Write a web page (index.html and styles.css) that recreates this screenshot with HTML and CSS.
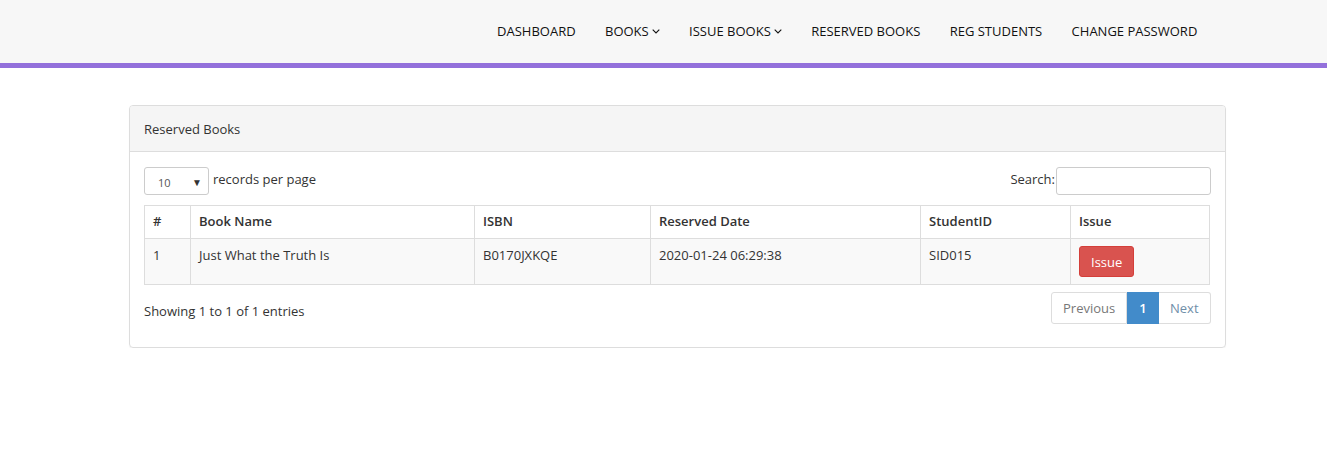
FILE: index.html
```html
<!DOCTYPE html>
<html>
<head>
<meta charset="utf-8">
<title>Reserved Books</title>
<link rel="stylesheet" href="styles.css">
</head>
<body>
<header class="navbar">
  <nav class="menu">
    <a class="item">DASHBOARD</a>
    <a class="item">BOOKS <svg class="caret" viewBox="0 0 8 5" width="8" height="5"><polyline points="0.7,0.7 4,4 7.3,0.7" fill="none" stroke="currentColor" stroke-width="1.1"/></svg></a>
    <a class="item">ISSUE BOOKS <svg class="caret" viewBox="0 0 8 5" width="8" height="5"><polyline points="0.7,0.7 4,4 7.3,0.7" fill="none" stroke="currentColor" stroke-width="1.1"/></svg></a>
    <a class="item">RESERVED BOOKS</a>
    <a class="item">REG STUDENTS</a>
    <a class="item">CHANGE PASSWORD</a>
  </nav>
</header>
<main class="content">
  <section class="panel">
    <div class="panel-heading">Reserved Books</div>
    <div class="panel-body">
      <div class="toolbar">
        <label class="length">
          <span class="select">10 <span class="arrow">&#9660;</span></span>
          <span class="lbl">records per page</span>
        </label>
        <label class="search"><span class="lbl">Search:</span><span class="input"></span></label>
      </div>
      <table class="grid">
        <thead>
          <tr>
            <th class="c1">#</th>
            <th class="c2">Book Name</th>
            <th class="c3">ISBN</th>
            <th class="c4">Reserved Date</th>
            <th class="c5">StudentID</th>
            <th class="c6">Issue</th>
          </tr>
        </thead>
        <tbody>
          <tr>
            <td>1</td>
            <td>Just What the Truth Is</td>
            <td>B0170JXKQE</td>
            <td>2020-01-24 06:29:38</td>
            <td>SID015</td>
            <td><button class="btn-issue">Issue</button></td>
          </tr>
        </tbody>
      </table>
      <div class="footer">
        <div class="info">Showing 1 to 1 of 1 entries</div>
        <ul class="pager">
          <li class="pg prev">Previous</li>
          <li class="pg active">1</li>
          <li class="pg next">Next</li>
        </ul>
      </div>
    </div>
  </section>
</main>
</body>
</html>
```

FILE: styles.css
```css
* { box-sizing: border-box; }
html, body { margin: 0; padding: 0; background: #fff; }
body {
  font-family: "Open Sans", "Liberation Sans", sans-serif;
  font-size: 13px;
  color: #333;
}
.navbar {
  height: 68px;
  background: #f7f7f7;
  border-bottom: 5px solid #9370db;
}
.menu {
  display: flex;
  justify-content: flex-end;
  height: 61px;
  align-items: center;
  padding-right: 115px;
}
.item {
  color: #111;
  font-size: 13px;
  padding: 0 14.7px;
  display: flex;
  align-items: center;
  gap: 3px;
  line-height: 18px;
}
.caret { margin-top: 1px; }
.content {
  padding-top: 37px;
  padding-left: 129px;
}
.panel {
  width: 1097px;
  border: 1px solid #ddd;
  border-radius: 4px;
  box-shadow: 0 1px 1px rgba(0,0,0,0.05);
}
.panel-heading {
  background: #f5f5f5;
  border-bottom: 1px solid #ddd;
  height: 46px;
  padding: 0 14px;
  display: flex;
  align-items: center;
  font-size: 13px;
  color: #333;
  border-radius: 3px 3px 0 0;
}
.panel-body {
  padding: 15px 14px 23px 14px;
}
.toolbar {
  display: flex;
  justify-content: space-between;
  align-items: flex-start;
  height: 38px;
}
.length { display: flex; align-items: flex-start; gap: 4px; height: 28px; }
.search { display: flex; align-items: flex-start; height: 28px; }
.lbl { line-height: 18px; padding-top: 3px; }
.select {
  display: inline-flex;
  align-items: center;
  justify-content: space-between;
  width: 65px;
  height: 28px;
  border: 1px solid #ccc;
  border-radius: 3px;
  padding: 2px 6px 0 13px;
  font-size: 11px;
  color: #555;
  background: #fff;
}
.arrow { font-size: 10px; color: #333; }
.input {
  display: inline-block;
  width: 155px;
  height: 28px;
  border: 1px solid #ccc;
  border-radius: 3px;
  margin-left: 1px;
}
.grid {
  width: 1066px;
  border-collapse: collapse;
  border: 1px solid #ddd;
}
.grid th, .grid td {
  border: 1px solid #ddd;
  text-align: left;
  vertical-align: top;
  line-height: 18px;
}
.grid th {
  font-weight: 600;
  padding: 6px 8px 8px 8px;
  height: 33px;
}
.grid td {
  padding: 7px 8px 6px 8px;
  background: #f9f9f9;
  height: 46px;
}
.c1 { width: 46px; }
.c2 { width: 284px; }
.c3 { width: 176px; }
.c4 { width: 270px; }
.c5 { width: 150px; }
.btn-issue {
  font-family: inherit;
  font-size: 13px;
  color: #fff;
  background: #d9534f;
  border: 1px solid #d43f3a;
  border-radius: 3px;
  height: 31px;
  padding: 0 11px;
  margin-top: 0;
}
.footer {
  display: flex;
  justify-content: space-between;
  align-items: flex-start;
  margin-top: 7px;
}
.info { padding-top: 10px; line-height: 18px; }
.pager {
  display: flex;
  list-style: none;
  margin: 0;
  padding: 0;
}
.pg {
  height: 32px;
  display: flex;
  align-items: center;
  border: 1px solid #ddd;
  padding: 0 11px;
  color: #777;
  background: #fff;
}
.prev { border-radius: 3px 0 0 3px; width: 76px; }
.active {
  background: #428bca;
  border-color: #428bca;
  color: #fff;
  font-weight: 600;
  width: 32px;
  justify-content: center;
  padding: 0;
}
.next { border-left: none; border-radius: 0 3px 3px 0; color: #6f8ea8; width: 52px; }
```
